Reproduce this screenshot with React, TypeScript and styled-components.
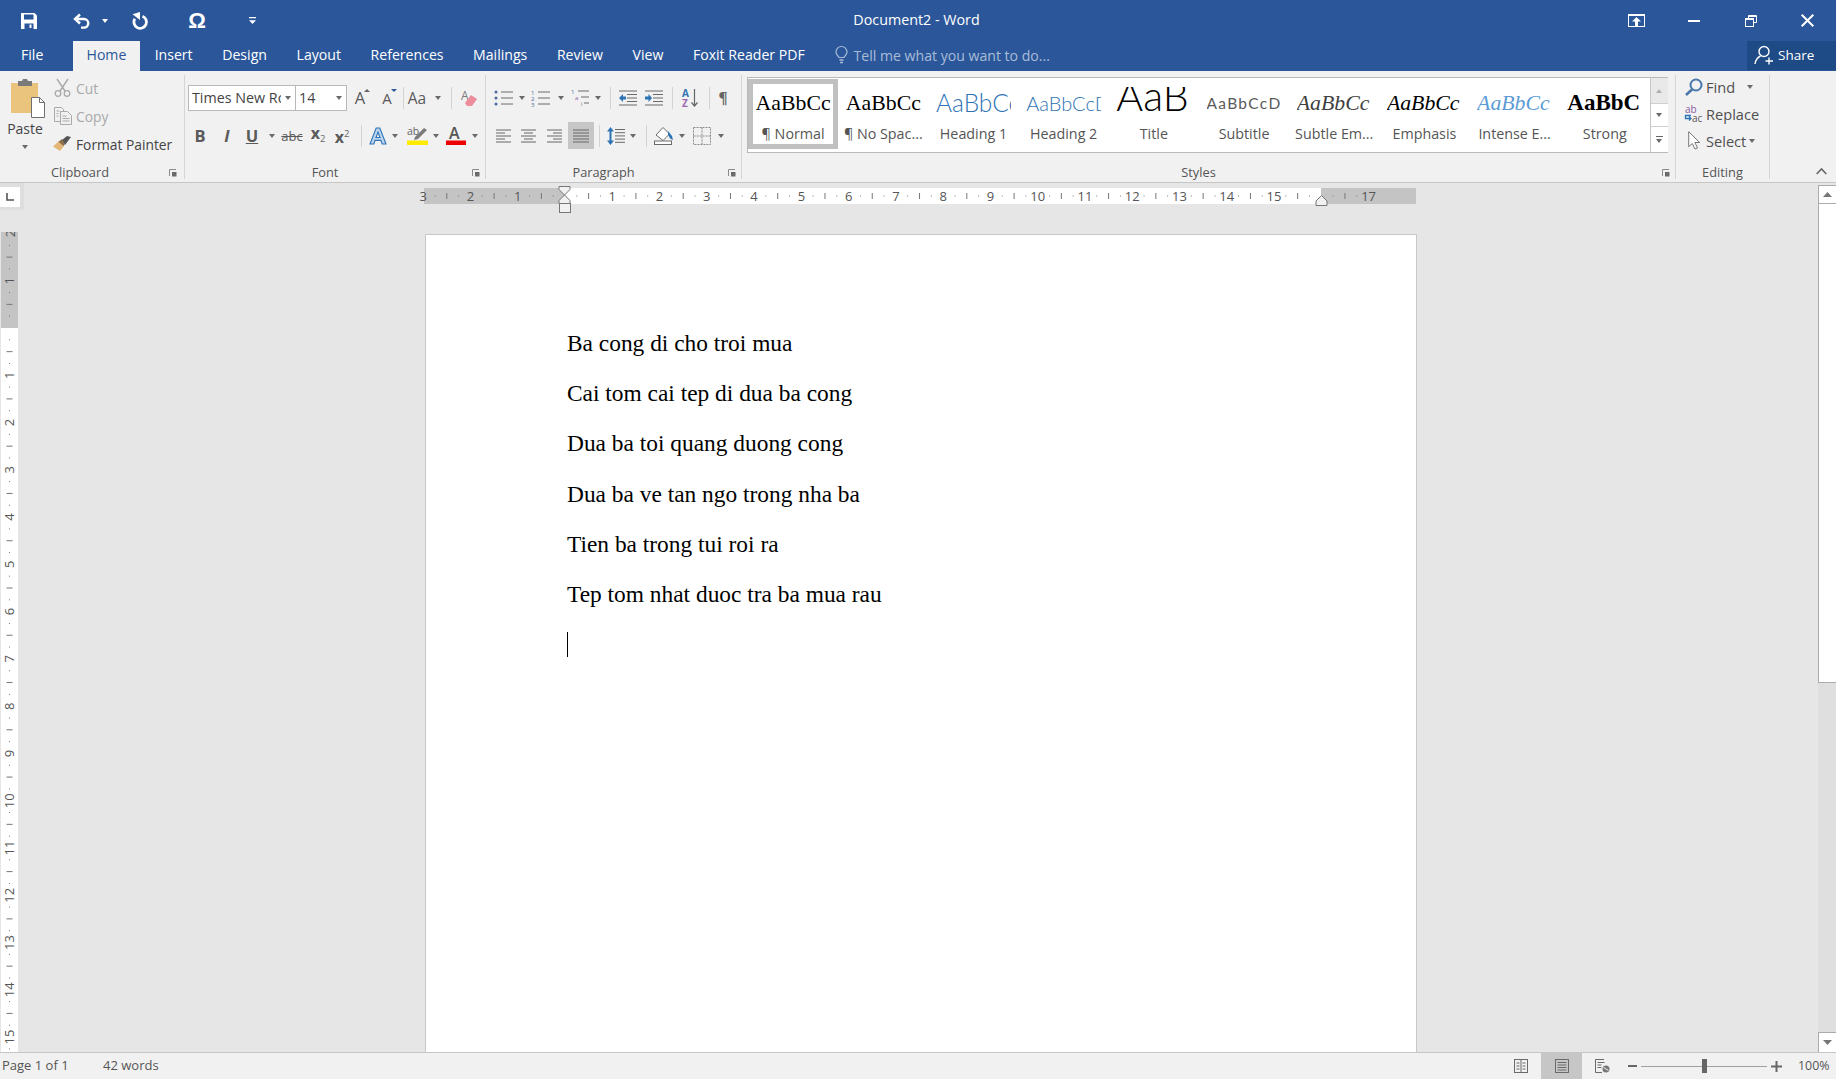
import React from "react";
import styled, { createGlobalStyle } from "styled-components";

const UI = `"Open Sans", "Noto Sans", sans-serif`;
const SERIF = `"Liberation Serif", "Times New Roman", serif`;
const CM = 47.27;

const Global = createGlobalStyle`
  html, body { margin: 0; padding: 0; background: #e6e6e6; overflow: hidden; }
  * { box-sizing: border-box; }
`;

const Shell = styled.div`
  width: 1836px; height: 1079px; display: flex; flex-direction: column; overflow: hidden;
  font-family: ${UI}; color: #444;
`;

/* ---------- title bar ---------- */
const TitleBar = styled.header`
  height: 41px; background: #2b579a; color: #fff; display: grid; grid-template-columns: 1fr auto 1fr; align-items: center;
`;
const Qat = styled.div`display: flex; align-items: center; padding-left: 21px;`;
const QatButton = styled.div<{ $w: number }>`
  width: ${p => p.$w}px; height: 24px; display: flex; align-items: center; justify-content: center; flex: none;
`;
const QatGap = styled.div<{ $w: number }>`width: ${p => p.$w}px; flex: none;`;
const Omega = styled.span`font: bold 22px "Liberation Sans", sans-serif; color: #fff; line-height: 24px;`;
const DocTitle = styled.div`font-size: 14.3px; color: #fff; padding-bottom: 3px; margin-right: 3px;`;
const WinControls = styled.div`display: flex; justify-content: flex-end; align-items: center;`;
const WinButton = styled.div<{ $w: number }>`
  width: ${p => p.$w}px; height: 38px; display: flex; align-items: center; justify-content: center; flex: none;
`;

/* ---------- tabs ---------- */
const TabRow = styled.nav`height: 30px; background: #2b579a; display: flex; align-items: stretch; padding-left: 17px; color: #fff;`;
const Tab = styled.div<{ $active?: boolean }>`
  padding: 0 ${p => (p.$active ? 13.5 : 14.8)}px; font-size: 14.1px; line-height: 28px; height: 30px; white-space: nowrap;
  background: ${p => (p.$active ? "#f1f1f1" : "transparent")};
  color: ${p => (p.$active ? "#2b579a" : "#fff")};
`;
const FileTab = styled(Tab)`width: 56px; padding: 0 0 0 4px;`;
const TellMe = styled.div`
  display: flex; align-items: center; gap: 6px; margin-left: 15px; padding-bottom: 2px; font-size: 14.1px; color: #a8bcd8; white-space: nowrap;
`;
const ShareButton = styled.div`
  margin-left: auto; width: 89px; background: #1e4a85; display: flex; align-items: center; gap: 4px; padding: 0 0 2px 7px; font-size: 13.5px; color: #fff; margin-bottom: 1px;
`;

/* ---------- ribbon ---------- */
const Ribbon = styled.section`
  height: 112px; background: #f1f1f1; border-bottom: 1px solid #c6c6c6; padding: 4px 0 3px; display: flex; align-items: stretch;
`;
const Group = styled.div<{ $w: number }>`
  width: ${p => p.$w}px; flex: none; border-right: 1px solid #d5d5d5; display: flex; flex-direction: column;
`;
const GroupBody = styled.div`flex: 1; min-height: 0; display: flex;`;
const GroupFoot = styled.div`height: 16px; display: flex; align-items: center; flex: none;`;
const GroupLabel = styled.div`flex: 1; text-align: center; font-size: 12.8px; line-height: 16px; color: #555; padding-top: 1px;`;
const Launcher = styled.div<{ $w?: number }>`
  width: ${p => p.$w ?? 20}px; display: flex; justify-content: center; flex: none; padding: 3px 0 0 2px;
`;
const Tail = styled.div`flex: 1; display: flex; align-items: flex-end; justify-content: flex-end; padding: 0 9px 4px 0;`;

const PasteColumn = styled.div`
  width: 50px; flex: none; display: flex; flex-direction: column; align-items: center; padding-top: 4px; font-size: 14px; color: #444;
`;
const PasteIconBox = styled.div`margin-left: 7px;`;
const PasteText = styled.div`line-height: 18px; margin-top: 2px;`;
const PasteArrow = styled.div`margin-top: 7px;`;
const ClipColumn = styled.div`display: flex; flex-direction: column; padding-left: 3px; margin-top: -1px;`;
const ClipRow = styled.div<{ $off?: boolean }>`
  height: 28px; display: flex; align-items: center; gap: 4px; font-size: 13.8px; white-space: nowrap;
  color: ${p => (p.$off ? "#a9a9a9" : "#444")};
`;
const ClipIcon = styled.div`width: 19px; display: flex; justify-content: center; flex: none;`;

const Rows = styled.div<{ $pad: number }>`
  display: flex; flex-direction: column; gap: 11px; padding: 9px 0 0 ${p => p.$pad}px;
`;
const Row = styled.div`height: 27px; display: flex; align-items: center;`;
const Btn = styled.div<{ $w: number; $on?: boolean }>`
  width: ${p => p.$w}px; height: 27px; flex: none; display: flex; align-items: center; justify-content: center;
  background: ${p => (p.$on ? "#c6c6c6" : "transparent")}; color: #555;
`;
const Divider = styled.div<{ $w: number }>`
  width: ${p => p.$w}px; height: 22px; flex: none; position: relative;
  &::after { content: ""; position: absolute; left: 50%; top: 0; bottom: 0; width: 1px; background: #d3d3d3; }
`;
const Drop = styled.i<{ $c?: string; $flip?: boolean }>`
  display: block; width: 0; height: 0; flex: none;
  border-left: 3.5px solid transparent; border-right: 3.5px solid transparent;
  border-top: 4px solid ${p => p.$c ?? "#6a6a6a"};
  transform: ${p => (p.$flip ? "rotate(180deg)" : "none")};
`;
const FontBox = styled.div<{ $w: number }>`
  width: ${p => p.$w}px; height: 26px; flex: none; background: #fff; border: 1px solid #b9b9b9; margin-right: -1px;
  display: flex; align-items: center; gap: 4px; font-size: 14.3px; color: #444; padding: 0 4px 0 3px; overflow: hidden; white-space: nowrap;
`;
const FontBoxText = styled.span`flex: 1; overflow: hidden; min-width: 0;`;
const Letter = styled.span<{ $bold?: boolean; $italic?: boolean; $under?: boolean; $size?: number; $strike?: boolean }>`
  font-family: ${UI}; font-weight: ${p => (p.$bold ? 700 : 400)}; font-style: ${p => (p.$italic ? "italic" : "normal")};
  text-decoration: ${p => (p.$under ? "underline" : p.$strike ? "line-through" : "none")};
  font-size: ${p => p.$size ?? 15}px; line-height: 20px; color: #5a5a5a; position: relative; white-space: nowrap;
`;
const Sub = styled.span`font-size: 9.5px; font-weight: 400; vertical-align: -3px; color: #666;`;
const Sup = styled.span`font-size: 9.5px; font-weight: 400; vertical-align: 6px; color: #666;`;
const Tip = styled.i<{ $down?: boolean }>`
  position: absolute; top: 1px; right: -5px; width: 0; height: 0;
  border-left: 3px solid transparent; border-right: 3px solid transparent;
  ${p => (p.$down ? "border-top: 3px solid #2b579a;" : "border-bottom: 3px solid #666;")}
`;

/* styles gallery */
const StylesBody = styled.div`padding: 2px 0 0 5px;`;
const Gallery = styled.div`
  width: 921px; height: 76px; background: #fff; border: 1px solid #b9b9b9; display: flex;
`;
const StyleItem = styled.div<{ $on?: boolean }>`
  width: 90.2px; height: 70px; flex: none; margin-top: 1px; display: flex; flex-direction: column; align-items: center;
  padding: ${p => (p.$on ? 0 : 5)}px;
  border: ${p => (p.$on ? "5px solid #c0c0c0" : "0 solid transparent")};
`;
const Preview = styled.div<{ $font: string; $size: number; $color: string; $italic?: boolean; $bold?: boolean; $weight?: number; $track?: number; $w?: number }>`
  width: ${p => p.$w ?? 75}px; height: 38px; overflow: hidden; white-space: nowrap; line-height: 38px; text-align: left; flex: none;
  font-family: ${p => p.$font}; font-size: ${p => p.$size}px; color: ${p => p.$color};
  font-style: ${p => (p.$italic ? "italic" : "normal")};
  font-weight: ${p => (p.$bold ? 700 : p.$weight ?? 400)};
  letter-spacing: ${p => p.$track ?? 0}px;
`;
const TitlePreview = styled(Preview)`height: 35px; margin-top: 3px; line-height: 18px;`;
const StyleLabel = styled.div`font-size: 14.3px; line-height: 22px; padding-top: 1px; color: #555; white-space: nowrap;`;
const GalleryScroll = styled.div`width: 18px; flex: none; margin-left: auto; border-left: 1px solid #c8c8c8; display: flex; flex-direction: column;`;
const ScrollCell = styled.div<{ $h: number; $off?: boolean }>`
  height: ${p => p.$h}px; flex: none; display: flex; flex-direction: column; gap: 2px; align-items: center; justify-content: center;
  background: ${p => (p.$off ? "#e9e9e9" : "#fff")}; border-bottom: 1px solid #d0d0d0;
  &:last-child { border-bottom: 0; }
`;
const TinyBar = styled.i`display: block; width: 7px; height: 1px; background: #666;`;

/* editing */
const EditColumn = styled.div`display: flex; flex-direction: column; padding: 0 0 0 6px; margin-top: -2px;`;
const EditRow = styled.div`height: 27px; display: flex; align-items: center; font-size: 14.6px; color: #505050; white-space: nowrap;`;
const EditIcon = styled.div`width: 24px; flex: none; display: flex; justify-content: center;`;
const EditDrop = styled.span<{ $gap: number }>`margin-left: ${p => p.$gap}px;`;

/* ---------- workspace ---------- */
const Workspace = styled.main`flex: 1; min-height: 0; background: #e6e6e6; display: flex; align-items: stretch;`;
const LeftRail = styled.div`width: 24px; flex: none; display: flex; flex-direction: column; min-height: 0;`;
const TabStop = styled.div`height: 27px; background: #dedede; padding: 4px 4px 3px 0; flex: none;`;
const TabStopInner = styled.div`height: 20px; background: #fff; display: flex; align-items: center; justify-content: center;`;
const VRulerWrap = styled.div`margin: 22px 0 0 1px; flex: 1; min-height: 0; overflow: hidden;`;
const Center = styled.div`flex: 1; min-width: 0; display: flex; flex-direction: column;`;
const RulerRow = styled.div`height: 51px; flex: none; padding: 2px 0 0 393px;`;
const Page = styled.article`
  margin-left: 401px; width: 992px; flex: 1; min-height: 0; background: #fff; border: 1px solid #c8c8c8; border-bottom: 0;
  padding: 96px 0 0 141px; font-family: ${SERIF}; font-size: 23.4px; color: #000;
`;
const Para = styled.p`margin: 0 0 26.2px; height: 24px; line-height: 24px; white-space: nowrap;`;
const TextCaret = styled.span`display: block; width: 1px; height: 25px; background: #000;`;
const Scrollbar = styled.aside`width: 18px; flex: none; padding-top: 2px; display: flex; flex-direction: column;`;
const ScrollBtn = styled.div`
  height: 19px; flex: none; background: #fff; border: 1px solid #ababab; border-right: 0; display: flex; align-items: center; justify-content: center;
`;
const ScrollBtnDown = styled(ScrollBtn)`height: 20px; border-bottom: 0;`;
const ScrollThumb = styled.div`height: 479px; flex: none; background: #fff; border: 1px solid #ababab; border-width: 0 0 1px 1px;`;
const ScrollTrack = styled.div`flex: 1; background: #dfdfdf;`;
const RulerText = styled.text`font-family: ${UI}; font-size: 13px; fill: #555;`;

/* ---------- status bar ---------- */
const StatusBar = styled.footer`
  height: 27px; flex: none; background: #f1f1f1; border-top: 1px solid #c6c6c6; display: flex; align-items: center; font-size: 13px; color: #555; padding: 0 8px 0 2px;
`;
const StatusText = styled.span<{ $w?: number }>`width: ${p => (p.$w ? `${p.$w}px` : "auto")}; flex: none; white-space: nowrap; margin-bottom: 3px;`;
const ViewButtons = styled.div`margin-left: auto; display: flex; align-items: stretch; height: 26px;`;
const ViewBtn = styled.div<{ $on?: boolean }>`
  width: 41px; display: flex; align-items: center; justify-content: center; background: ${p => (p.$on ? "#c6c6c6" : "transparent")};
`;
const ZoomBtn = styled.div`width: 18px; display: flex; align-items: center; justify-content: center; flex: none;`;
const Slider = styled.div`width: 126px; display: flex; align-items: center; flex: none;`;
const SliderLine = styled.i`flex: 1; height: 1px; background: #a0a0a0;`;
const SliderThumb = styled.i`width: 5px; height: 14px; background: #666; flex: none;`;
const Percent = styled.span`margin-left: 13px; width: 30px; flex: none; text-align: right; font-size: 12.4px; align-self: center; margin-bottom: 2px;`;

/* ---------- icons ---------- */
const G = "#6a6a6a";
const Ic = ({ w, h, children, s = G }: { w: number; h: number; children: React.ReactNode; s?: string }) => (
  <svg width={w} height={h} viewBox={`0 0 ${w} ${h}`} fill="none" stroke={s} style={{ display: "block", flex: "none", overflow: "visible" }}>
    {children}
  </svg>
);

const SaveIcon = () => (
  <Ic w={16} h={16} s="none">
    <path fill="#fff" d="M0 0h13.500L16 2.500V16H0z" />
    <path fill="#2b579a" d="M3 1.500h9.500v5H3zM3.500 10.500h9V16h-9z" />
    <path fill="#fff" d="M8.500 11.500h2v3.500h-2z" />
  </Ic>
);
const UndoIcon = () => (
  <Ic w={18} h={16} s="#fff">
    <path strokeWidth="2.4" d="M7 1.500 2 6l5 4.500" />
    <path strokeWidth="2.4" d="M2.500 6H11a4.300 4.300 0 0 1 0 8.600H8" />
  </Ic>
);
const RedoIcon = () => (
  <Ic w={18} h={18} s="#fff">
    <path strokeWidth="2.800" d="M11.500 4.200A6.300 6.300 0 1 1 3.800 6.800" />
    <path fill="#fff" stroke="none" d="M1.500 2.200 9 0v8z" />
  </Ic>
);
const CustomizeIcon = () => (
  <Ic w={7} h={8} s="none">
    <path fill="#fff" d="M0 0h7v1.200H0zM0 3.200h7L3.500 7z" />
  </Ic>
);
const RibbonModeIcon = () => (
  <Ic w={17} h={13} s="#fff">
    <rect x=".5" y=".5" width="16" height="12" strokeWidth="1" />
    <path fill="#fff" stroke="none" d="M0 0h17v2H0zM8.500 3 13 7.500h-3V12H7V7.500H4z" />
  </Ic>
);
const MinIcon = () => <Ic w={12} h={2} s="none"><path fill="#fff" d="M0 0h12v2H0z" /></Ic>;
const RestoreIcon = () => (
  <Ic w={12} h={12} s="#fff">
    <path strokeWidth="1" d="M3.500 3V.5h8v7H9" />
    <rect x=".5" y="3.500" width="8" height="8" strokeWidth="1" />
    <path strokeWidth="1.600" d="M1 4.200h7M4 1.200h7" />
  </Ic>
);
const CloseIcon = () => <Ic w={13} h={13} s="#fff"><path strokeWidth="2" d="M.7.7l11.600 11.600M12.300.7.7 12.300" /></Ic>;
const BulbIcon = () => (
  <Ic w={13} h={18} s="#a8bcd8">
    <path strokeWidth="1.200" d="M4 11.500C3 9.500 1 8.500 1 6a5.500 5.500 0 0 1 11 0c0 2.500-2 3.500-3 5.500z" />
    <path strokeWidth="1.400" d="M4.500 14h4M5 16.500h3" />
  </Ic>
);
const ShareIcon = () => (
  <Ic w={20} h={20} s="#fff">
    <circle cx="10" cy="6.500" r="5" strokeWidth="1.400" />
    <path strokeWidth="1.400" d="M1 19c.5-4 2.500-6.500 5.500-8" />
    <path strokeWidth="1.400" d="M15 12.500v7M11.500 16h7.500" />
  </Ic>
);

const PasteIcon = () => (
  <Ic w={35} h={39} s="none">
    <path fill="#eac47d" d="M0 4h27v30H0z" />
    <path fill="#7a7a7a" d="M7 2h4l1-2h4l1 2h4v5H7z" />
    <path fill="#fff" stroke="#6f6f6f" strokeWidth="1" d="M20.500 18.500h8l5 5v15h-13z" />
    <path stroke="#6f6f6f" strokeWidth="1" d="M28.500 18.500v5h5" />
  </Ic>
);
const CutIcon = () => (
  <Ic w={17} h={18} s="#a9a9a9">
    <path strokeWidth="1.400" d="M3 0l8 12M14 0 6 12" />
    <circle cx="4" cy="14.500" r="2.800" strokeWidth="1.300" />
    <circle cx="13" cy="14.500" r="2.800" strokeWidth="1.300" />
  </Ic>
);
const CopyIcon = () => (
  <Ic w={18} h={18} s="#a9a9a9">
    <path d="M.5.500h7l2 2v12H.5z" />
    <path fill="#f1f1f1" d="M6.500 4.500h7l4 4v9h-11z" />
    <path d="M8.500 9h4M8.500 11.500h7M8.500 14h7M2.500 4h3M2.500 6.500h2M2.500 9h2" />
  </Ic>
);
const PainterIcon = () => (
  <Ic w={19} h={16} s="none">
    <path fill="#e3b778" d="M0 10.500 6 5l5 5-4 5z" />
    <path fill="#555" d="M9 4 14 0l4 1-6 8z" />
    <path fill="#8a6f4d" d="M5.500 5.800 9 3l3 5-1.500 2z" />
  </Ic>
);
const LaunchIcon = () => (
  <Ic w={8} h={8}>
    <path d="M.5 7V.5H7" stroke="#8a8a8a" />
    <path fill="#6a6a6a" stroke="none" d="M3 3l4.500 0V7.500H3z" />
  </Ic>
);
const ChevronUp = () => <Ic w={11} h={7} s="#666"><path strokeWidth="1.600" d="M.7 6 5.500 1l4.800 5" /></Ic>;
const EraserIcon = () => (
  <Ic w={17} h={16} s="none">
    <text x="0" y="10" fontSize="12" fill="#7a7a7a" fontFamily={UI}>A</text>
    <path fill="#ed8c9b" d="M10 5l6 4-5 7H6l-2-3z" />
  </Ic>
);
const TextFxIcon = () => (
  <Ic w={18} h={18} s="#2e74b5">
    <path fill="#bcd4ef" strokeWidth="1.100" d="M7.200 1h3.600L17 17h-3.800l-1.300-3.600H6L4.800 17H1zM7 10.500h4L9 5z" />
  </Ic>
);
const HighlightIcon = () => (
  <Ic w={21} h={19} s="none">
    <text x="0" y="9" fontSize="10.500" fill="#666" fontFamily={UI}>ab</text>
    <path fill="#7a7a7a" d="M8 11 17 2l3 2-9 9-4 1z" />
    <path fill="#ffeb00" d="M0 14.500h21V19H0z" />
  </Ic>
);
const ColorIcon = () => (
  <Ic w={20} h={19} s="none">
    <text x="3" y="13" fontSize="16" fontWeight="600" fill="#555" fontFamily={UI}>A</text>
    <path fill="#e00" d="M0 14.500h20V19H0z" />
  </Ic>
);
const Lines = ({ x, y, widths, gap, c = G }: { x: number[]; y: number; widths: number[]; gap: number; c?: string }) => (
  <>
    {widths.map((w, i) => (
      <path key={i} stroke={c} d={`M${x[i]} ${y + i * gap + 0.5}h${w}`} />
    ))}
  </>
);
const BulletsIcon = () => (
  <Ic w={20} h={16}>
    <circle cx="2" cy="2" r="1.500" fill="#4a6c9b" stroke="none" />
    <circle cx="2" cy="8" r="1.500" fill="#4a6c9b" stroke="none" />
    <circle cx="2" cy="14" r="1.500" fill="#4a6c9b" stroke="none" />
    <Lines x={[7, 7, 7]} y={1.500} widths={[12, 12, 12]} gap={6} />
  </Ic>
);
const NumbersIcon = () => (
  <Ic w={20} h={16} s="none">
    <text x="0" y="5" fontSize="6" fill="#4a6c9b" fontFamily={UI}>1</text>
    <text x="0" y="11" fontSize="6" fill="#4a6c9b" fontFamily={UI}>2</text>
    <text x="0" y="17" fontSize="6" fill="#4a6c9b" fontFamily={UI}>3</text>
    <Lines x={[7, 7, 7]} y={1.500} widths={[12, 12, 12]} gap={6} />
  </Ic>
);
const MultiIcon = () => (
  <Ic w={20} h={17} s="none">
    <text x="0" y="5" fontSize="6" fill="#4a6c9b" fontFamily={UI}>1</text>
    <text x="4" y="11" fontSize="6" fill="#8a5aa0" fontFamily={UI}>a</text>
    <text x="10" y="17" fontSize="6" fill="#666" fontFamily={UI}>i</text>
    <Lines x={[7, 10, 13]} y={1.500} widths={[11, 8, 5]} gap={6} />
  </Ic>
);
const IndentIcon = ({ flip }: { flip?: boolean }) => (
  <Ic w={18} h={16}>
    <Lines x={[0, 8, 8, 8, 0]} y={.5} widths={[18, 10, 10, 10, 18]} gap={3.500} />
    {flip ? (
      <path fill="#2e74b5" stroke="none" d="M0 8l4-4v2.500h3v3H4V12z" />
    ) : (
      <path fill="#2e74b5" stroke="none" d="M0 6.500h3.500V4L7 8l-3.500 4V9.500H0z" />
    )}
  </Ic>
);
const SortIcon = () => (
  <Ic w={17} h={20} s="none">
    <text x="0" y="9" fontSize="10" fontWeight="700" fill="#2e74b5" fontFamily={UI}>A</text>
    <text x="0" y="19" fontSize="10" fontWeight="700" fill="#9a6ab0" fontFamily={UI}>Z</text>
    <path stroke="#666" strokeWidth="1.200" d="M12.500 1v17M9.500 14.500l3 3.500 3-3.500" />
  </Ic>
);
const PilcrowText = styled.span`font: 700 17px "Liberation Serif", serif; color: #666; line-height: 20px;`;
const AlignIcon = ({ kind }: { kind: "l" | "c" | "r" | "j" }) => {
  const ws = kind === "j" ? [16, 16, 16, 16, 16] : [15, 9, 15, 9, 15];
  const xs = ws.map(w => (kind === "c" ? (15 - w) / 2 : kind === "r" ? 15 - w : 0));
  return (
    <Ic w={kind === "j" ? 16 : 15} h={13}>
      <Lines x={xs} y={.5} widths={ws} gap={3} c="#666" />
    </Ic>
  );
};
const SpacingIcon = () => (
  <Ic w={18} h={18}>
    <Lines x={[8, 8, 8, 8, 8]} y={2} widths={[10, 10, 10, 10, 10]} gap={3.200} />
    <path fill="#2e74b5" stroke="none" d="M3.500 0 7 4.500H4.500v9H7L3.500 18 0 13.500h2.500v-9H0z" />
  </Ic>
);
const ShadingIcon = () => (
  <Ic w={19} h={19}>
    <path fill="#fff" stroke="#6a6a6a" d="M2 9 9 1.500 15.500 8 9 14.500z" />
    <path fill="#2e74b5" stroke="none" d="M14 5l4 5 1 4-3-1.500-2-4z" />
    <rect x=".5" y="15" width="17" height="3.500" fill="#fff" stroke="#6a6a6a" />
  </Ic>
);
const BordersIcon = () => (
  <Ic w={18} h={18} s="#8a8a8a">
    <rect x=".5" y=".5" width="17" height="17" strokeDasharray="2 1" />
    <path strokeDasharray="2 1" d="M9 .5v17M.5 9h17" />
  </Ic>
);
const FindIcon = () => (
  <Ic w={18} h={18} s="#4a77ab">
    <circle cx="11" cy="7" r="5.500" strokeWidth="2" />
    <path strokeWidth="2.600" d="M7 11.500 1 17" />
  </Ic>
);
const ReplaceIcon = () => (
  <Ic w={20} h={18} s="none">
    <text x="1" y="7.500" fontSize="10" fill="#8a5aa0" fontFamily={UI}>ab</text>
    <text x="8" y="17" fontSize="10" fill="#555" fontFamily={UI}>ac</text>
    <path stroke="#2e74b5" strokeWidth="1.300" d="M7 10.500H1.500v3H7M5 11.500l2 2-2 2" />
  </Ic>
);
const SelectIcon = () => (
  <Ic w={12} h={19} s="#777">
    <path fill="#fff" d="M.7.7v15l3.600-3.200 2.700 5.500 2.500-1-2.600-5.500h4.800z" />
  </Ic>
);
const ScrollArrow = ({ up }: { up?: boolean }) => (
  <Ic w={9} h={5} s="none"><path fill="#777" d={up ? "M4.500 0 9 5H0z" : "M0 0h9L4.500 5z"} /></Ic>
);
const TabStopIcon = () => <Ic w={8} h={8} s="#555"><path strokeWidth="1.600" d="M1 0v7h7" /></Ic>;
const ReadIcon = () => (
  <Ic w={14} h={14}>
    <rect x=".5" y=".5" width="13" height="13" />
    <path d="M7 .5v13M2.500 4h3M2.500 7h3M2.500 10h3M8.500 4h3M8.500 7h3M8.500 10h3" />
  </Ic>
);
const PrintIcon = () => (
  <Ic w={14} h={14}>
    <rect x=".5" y=".5" width="13" height="13" />
    <path d="M2.500 3.500h9M2.500 6h9M2.500 8.500h9M2.500 11h9" />
  </Ic>
);
const WebIcon = () => (
  <Ic w={15} h={14}>
    <path d="M9 .5H.5v13H7M2.500 3.500h7M2.500 6h4M2.500 8.500h4" />
    <circle cx="11" cy="10" r="3.500" fill="#777" stroke="none" />
    <path stroke="#f1f1f1" d="M8.500 8.500l5 3" />
  </Ic>
);
const MinusIcon = () => <Ic w={9} h={2} s="none"><path fill="#666" d="M0 0h9v2H0z" /></Ic>;
const PlusIcon = () => <Ic w={11} h={11} s="none"><path fill="#666" d="M4.500 0h2v4.500H11v2H6.500V11h-2V6.500H0v-2h4.500z" /></Ic>;

/* ---------- rulers ---------- */
const quarters = [0.25, 0.5, 0.75];
const range = (a: number, b: number) => Array.from({ length: b - a + 1 }, (_, i) => a + i);

const HRuler = () => {
  const left = 417;
  const zero = 565 - left;
  const top = 3;
  const h = 16;
  const mid = top + h / 2;
  return (
    <svg width={1003} height={30} style={{ display: "block" }}>
      <rect x={7} y={top} width={141} height={h} fill="#c4c4c4" />
      <rect x={148} y={top} width={756} height={h} fill="#fff" />
      <rect x={904} y={top} width={95} height={h} fill="#c4c4c4" />
      {range(-3, 17).map(n => (
        <g key={n}>
          {n !== 0 && n !== 16 && (
            <RulerText x={zero + n * CM} y={mid + 4.500} textAnchor="middle">{Math.abs(n)}</RulerText>
          )}
          {n < 17 && quarters.map(q => {
            const x = zero + (n + q) * CM;
            return q === 0.5
              ? <rect key={q} x={x - 0.5} y={mid - 3} width={1} height={6} fill="#777" />
              : <rect key={q} x={x - 0.5} y={mid - 0.5} width={1} height={1} fill="#777" />;
          })}
        </g>
      ))}
      <path d={`M${zero - 6} 1.500h11v3l-5.500 5.500-5.500-5.500z`} fill="#f1f1f1" stroke="#777" />
      <path d={`M${zero - 0.500} 10l5.500 5.500v3h-11v-3z`} fill="#f1f1f1" stroke="#777" />
      <rect x={zero - 5.500} y={18.500} width={11} height={9} fill="#f1f1f1" stroke="#777" />
      <path d={`M${904.500} 10.500l5.500 5.500v4.500h-11v-4.500z`} fill="#f1f1f1" stroke="#777" />
    </svg>
  );
};

const VRuler = () => {
  const zero = 96;
  const w = 17;
  const mid = w / 2;
  return (
    <svg width={w} height={820} style={{ display: "block" }}>
      <rect x={0} y={0} width={w} height={zero} fill="#c4c4c4" />
      <rect x={0} y={zero} width={w} height={724} fill="#fff" />
      {range(-2, 16).map(n => (
        <g key={n}>
          {n !== 0 && n !== 16 && (
            <RulerText
              x={mid}
              y={zero + n * CM}
              textAnchor="middle"
              dominantBaseline="central"
              transform={`rotate(-90 ${mid} ${zero + n * CM})`}
            >
              {Math.abs(n)}
            </RulerText>
          )}
          {quarters.map(q => {
            const y = zero + (n + q) * CM;
            return q === 0.5
              ? <rect key={q} x={mid - 3} y={y - 0.5} width={6} height={1} fill="#777" />
              : <rect key={q} x={mid - 0.5} y={y - 0.5} width={1} height={1} fill="#777" />;
          })}
        </g>
      ))}
    </svg>
  );
};

const LATO = `"Lato", sans-serif`;
const stylesList = [
  { label: "¶ Normal", font: SERIF, size: 21.8, color: "#000", on: true },
  { label: "¶ No Spac...", font: SERIF, size: 21.8, color: "#000" },
  { label: "Heading 1", font: LATO, size: 24.5, color: "#2e74b5", weight: 300 },
  { label: "Heading 2", font: LATO, size: 20, color: "#2e74b5", weight: 300, text: "AaBbCcD" },
  { label: "Title", font: LATO, size: 41, color: "#000", weight: 300, text: "AaB", title: true },
  { label: "Subtitle", font: LATO, size: 15.5, color: "#595959", track: 1.3, text: "AaBbCcD" },
  { label: "Subtle Em...", font: SERIF, size: 21.8, color: "#404040", italic: true },
  { label: "Emphasis", font: SERIF, size: 21.8, color: "#000", italic: true },
  { label: "Intense E...", font: SERIF, size: 21.8, color: "#5b9bd5", italic: true },
  { label: "Strong", font: SERIF, size: 23, color: "#000", bold: true, text: "AaBbC" },
];

const lines = [
  "Ba cong di cho troi mua",
  "Cai tom cai tep di dua ba cong",
  "Dua ba toi quang duong cong",
  "Dua ba ve tan ngo trong nha ba",
  "Tien ba trong tui roi ra",
  "Tep tom nhat duoc tra ba mua rau",
];

export default function App() {
  return (
    <Shell>
      <Global />
      <TitleBar>
        <Qat>
          <QatButton $w={16}><SaveIcon /></QatButton>
          <QatGap $w={36} />
          <QatButton $w={18}><UndoIcon /></QatButton>
          <QatButton $w={28}><Drop $c="#fff" /></QatButton>
          <QatGap $w={12} />
          <QatButton $w={18}><RedoIcon /></QatButton>
          <QatGap $w={39} />
          <QatButton $w={18}><Omega>Ω</Omega></QatButton>
          <QatGap $w={43} />
          <QatButton $w={7}><CustomizeIcon /></QatButton>
        </Qat>
        <DocTitle>Document2 - Word</DocTitle>
        <WinControls>
          <WinButton $w={57}><RibbonModeIcon /></WinButton>
          <WinButton $w={57}><MinIcon /></WinButton>
          <WinButton $w={57}><RestoreIcon /></WinButton>
          <WinButton $w={57}><CloseIcon /></WinButton>
        </WinControls>
      </TitleBar>

      <TabRow>
        <FileTab>File</FileTab>
        <Tab $active>Home</Tab>
        <Tab>Insert</Tab>
        <Tab>Design</Tab>
        <Tab>Layout</Tab>
        <Tab>References</Tab>
        <Tab>Mailings</Tab>
        <Tab>Review</Tab>
        <Tab>View</Tab>
        <Tab>Foxit Reader PDF</Tab>
        <TellMe><BulbIcon />Tell me what you want to do...</TellMe>
        <ShareButton><ShareIcon />Share</ShareButton>
      </TabRow>

      <Ribbon>
        <Group $w={185}>
          <GroupBody>
            <PasteColumn>
              <PasteIconBox><PasteIcon /></PasteIconBox>
              <PasteText>Paste</PasteText>
              <PasteArrow><Drop /></PasteArrow>
            </PasteColumn>
            <ClipColumn>
              <ClipRow $off><ClipIcon><CutIcon /></ClipIcon>Cut</ClipRow>
              <ClipRow $off><ClipIcon><CopyIcon /></ClipIcon>Copy</ClipRow>
              <ClipRow><ClipIcon><PainterIcon /></ClipIcon>Format Painter</ClipRow>
            </ClipColumn>
          </GroupBody>
          <GroupFoot>
            <GroupLabel>Clipboard</GroupLabel>
            <Launcher $w={24}><LaunchIcon /></Launcher>
          </GroupFoot>
        </Group>

        <Group $w={301}>
          <GroupBody>
            <Rows $pad={3}>
              <Row>
                <FontBox $w={108}><FontBoxText>Times New Roman</FontBoxText><Drop /></FontBox>
                <FontBox $w={52}><FontBoxText>14</FontBoxText><Drop /></FontBox>
                <Btn $w={28}><Letter $size={16.5}>A<Tip /></Letter></Btn>
                <Btn $w={26}><Letter $size={15}>A<Tip $down /></Letter></Btn>
                <Divider $w={6} />
                <Btn $w={22}><Letter $size={15.5}>Aa</Letter></Btn>
                <Btn $w={20}><Drop /></Btn>
                <Divider $w={5} />
                <Btn $w={32}><EraserIcon /></Btn>
              </Row>
              <Row>
                <Btn $w={24}><Letter $bold $size={16.5}>B</Letter></Btn>
                <Btn $w={30}><Letter $bold $italic $size={16.5}>I</Letter></Btn>
                <Btn $w={20}><Letter $bold $under $size={16.5}>U</Letter></Btn>
                <Btn $w={20}><Drop /></Btn>
                <Btn $w={20}><Letter $strike $size={13}>abc</Letter></Btn>
                <Btn $w={32}><Letter $bold $size={16}>x<Sub>2</Sub></Letter></Btn>
                <Btn $w={16}><Letter $bold $size={16}>x<Sup>2</Sup></Letter></Btn>
                <Divider $w={21} />
                <Btn $w={14}><TextFxIcon /></Btn>
                <Btn $w={20}><Drop /></Btn>
                <Btn $w={24}><HighlightIcon /></Btn>
                <Btn $w={14}><Drop /></Btn>
                <Btn $w={26}><ColorIcon /></Btn>
                <Btn $w={12}><Drop /></Btn>
              </Row>
            </Rows>
          </GroupBody>
          <GroupFoot>
            <GroupLabel>Font</GroupLabel>
            <Launcher><LaunchIcon /></Launcher>
          </GroupFoot>
        </Group>

        <Group $w={256}>
          <GroupBody>
            <Rows $pad={5}>
              <Row>
                <Btn $w={26}><BulletsIcon /></Btn>
                <Btn $w={10}><Drop /></Btn>
                <Btn $w={28}><NumbersIcon /></Btn>
                <Btn $w={12}><Drop /></Btn>
                <Btn $w={28}><MultiIcon /></Btn>
                <Btn $w={6}><Drop /></Btn>
                <Divider $w={18} />
                <Btn $w={18}><IndentIcon flip /></Btn>
                <Btn $w={34}><IndentIcon /></Btn>
                <Divider $w={1} />
                <Btn $w={36}><SortIcon /></Btn>
                <Divider $w={1} />
                <Btn $w={28}><PilcrowText>¶</PilcrowText></Btn>
              </Row>
              <Row>
                <Btn $w={25}><AlignIcon kind="l" /></Btn>
                <Btn $w={25}><AlignIcon kind="c" /></Btn>
                <Btn $w={27}><AlignIcon kind="r" /></Btn>
                <Btn $w={26} $on><AlignIcon kind="j" /></Btn>
                <Divider $w={9} />
                <Btn $w={26}><SpacingIcon /></Btn>
                <Btn $w={8}><Drop /></Btn>
                <Divider $w={17} />
                <Btn $w={18}><ShadingIcon /></Btn>
                <Btn $w={20}><Drop /></Btn>
                <Btn $w={20}><BordersIcon /></Btn>
                <Btn $w={18}><Drop /></Btn>
              </Row>
            </Rows>
          </GroupBody>
          <GroupFoot>
            <GroupLabel>Paragraph</GroupLabel>
            <Launcher><LaunchIcon /></Launcher>
          </GroupFoot>
        </Group>

        <Group $w={934}>
          <GroupBody>
            <StylesBody>
              <Gallery>
                {stylesList.map(s => {
                  const Box = s.title ? TitlePreview : Preview;
                  return (
                    <StyleItem key={s.label} $on={s.on}>
                      <Box
                        $font={s.font}
                        $size={s.size}
                        $color={s.color}
                        $italic={s.italic}
                        $bold={s.bold}
                        $weight={s.weight}
                        $track={s.track}
                      >
                        {s.text ?? "AaBbCc"}
                      </Box>
                      <StyleLabel>{s.label}</StyleLabel>
                    </StyleItem>
                  );
                })}
                <GalleryScroll>
                  <ScrollCell $h={26} $off><Drop $c="#b0b0b0" $flip /></ScrollCell>
                  <ScrollCell $h={23}><Drop /></ScrollCell>
                  <ScrollCell $h={25}><TinyBar /><Drop /></ScrollCell>
                </GalleryScroll>
              </Gallery>
            </StylesBody>
          </GroupBody>
          <GroupFoot>
            <GroupLabel>Styles</GroupLabel>
            <Launcher><LaunchIcon /></Launcher>
          </GroupFoot>
        </Group>

        <Group $w={94}>
          <GroupBody>
            <EditColumn>
              <EditRow><EditIcon><FindIcon /></EditIcon>Find<EditDrop $gap={12}><Drop /></EditDrop></EditRow>
              <EditRow><EditIcon><ReplaceIcon /></EditIcon>Replace</EditRow>
              <EditRow><EditIcon><SelectIcon /></EditIcon>Select<EditDrop $gap={3}><Drop /></EditDrop></EditRow>
            </EditColumn>
          </GroupBody>
          <GroupFoot><GroupLabel>Editing</GroupLabel></GroupFoot>
        </Group>
        <Tail><ChevronUp /></Tail>
      </Ribbon>

      <Workspace>
        <LeftRail>
          <TabStop><TabStopInner><TabStopIcon /></TabStopInner></TabStop>
          <VRulerWrap><VRuler /></VRulerWrap>
        </LeftRail>
        <Center>
          <RulerRow><HRuler /></RulerRow>
          <Page>
            {lines.map(l => <Para key={l}>{l}</Para>)}
            <Para><TextCaret /></Para>
          </Page>
        </Center>
        <Scrollbar>
          <ScrollBtn><ScrollArrow up /></ScrollBtn>
          <ScrollThumb />
          <ScrollTrack />
          <ScrollBtnDown><ScrollArrow /></ScrollBtnDown>
        </Scrollbar>
      </Workspace>

      <StatusBar>
        <StatusText $w={101}>Page 1 of 1</StatusText>
        <StatusText>42 words</StatusText>
        <ViewButtons>
          <ViewBtn><ReadIcon /></ViewBtn>
          <ViewBtn $on><PrintIcon /></ViewBtn>
          <ViewBtn><WebIcon /></ViewBtn>
          <ZoomBtn><MinusIcon /></ZoomBtn>
          <Slider><SliderLine /><SliderThumb /><SliderLine /></Slider>
          <ZoomBtn><PlusIcon /></ZoomBtn>
          <Percent>100%</Percent>
        </ViewButtons>
      </StatusBar>
    </Shell>
  );
}
